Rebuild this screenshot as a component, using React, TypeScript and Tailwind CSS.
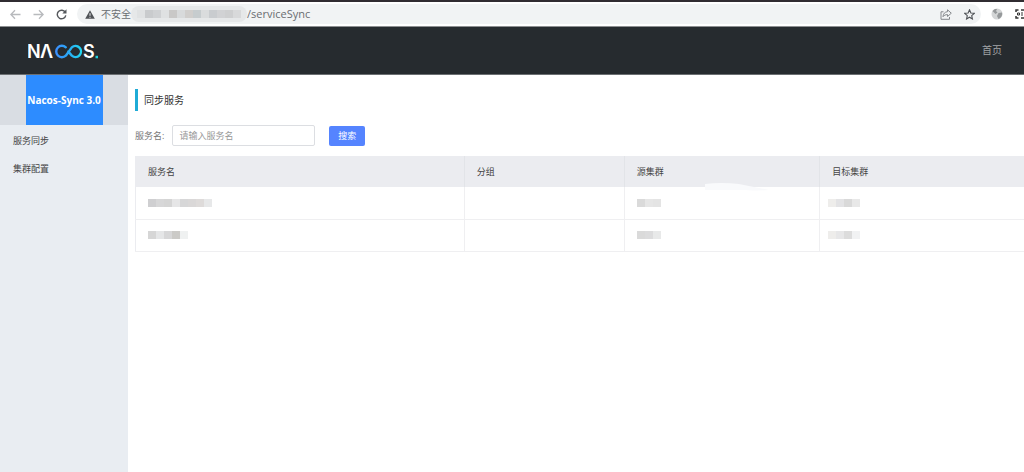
import { useState } from 'react'

interface SyncRow {
  id: string
  service: string[]
  group: string[]
  source: string[]
  target: string[]
}

const rows: SyncRow[] = [
  {
    id: 'a',
    service: ['bg-[#cfcfd1]', 'bg-[#d7d7d8]', 'bg-[#d5d5d5]', 'bg-[#e6e6e7]', 'bg-[#d7d7d8]', 'bg-[#dad8d8]', 'bg-[#dedbda]', 'bg-[#e7e8e9]'],
    group: [],
    source: ['bg-[#dadada]', 'bg-[#e6e6e6]', 'bg-[#e4e4e4]'],
    target: ['bg-[#eeedeb]', 'bg-[#e3e3e5]', 'bg-[#d9d9d9]', 'bg-[#e8e8e8]'],
  },
  {
    id: 'b',
    service: ['bg-[#d6d6d6]', 'bg-[#e5e6e7]', 'bg-[#d7d7d8]', 'bg-[#cbcac7]', 'bg-[#eff1f1]'],
    group: [],
    source: ['bg-[#dadada]', 'bg-[#dcdcdd]', 'bg-[#e8e9e9]'],
    target: ['bg-[#eeedeb]', 'bg-[#e7e7e8]', 'bg-[#dcdcdc]', 'bg-[#f1f2f3]'],
  },
]

const addressBlocks = [
  'bg-[#e0e2e3]', 'bg-[#c9cbcd]', 'bg-[#cfd1d3]', 'bg-[#dfe1e2]', 'bg-[#c9c8c7]', 'bg-[#d8dadb]', 'bg-[#d0cecc]',
  'bg-[#c6ccce]', 'bg-[#dadcdd]', 'bg-[#c9cccf]', 'bg-[#d1d2d4]', 'bg-[#cecfd0]', 'bg-[#d8d9da]',
]

function Mosaic({ blocks }: { blocks: string[] }) {
  return (
    <span className="flex" aria-hidden="true">
      {blocks.map((color, i) => (
        <span key={i} className={`w-2 h-2 ${color}`} />
      ))}
    </span>
  )
}

function Logo() {
  return (
    <svg width="72" height="30" viewBox="0 0 72 30" role="img" aria-label="Nacos">
      <defs>
        <linearGradient id="loop" gradientUnits="userSpaceOnUse" x1="26" y1="0" x2="55" y2="0">
          <stop offset="0" stopColor="#3f8cff" />
          <stop offset="0.45" stopColor="#2ba4f5" />
          <stop offset="1" stopColor="#1fdcf0" />
        </linearGradient>
      </defs>
      <g fill="#fff" fontFamily="Inter, 'Liberation Sans', sans-serif" fontSize="18" fontWeight="600">
        <text x="-1" y="22">N</text>
        <text x="12" y="22">Λ</text>
        <text x="55" y="22">S</text>
      </g>
      <path
        d="M37.800 11.300A5.700 5.700 0 1 0 37.800 19.700L43.800 11.400A5.500 5.500 0 1 1 43.800 19.600L40.300 15.500"
        fill="none"
        stroke="url(#loop)"
        strokeWidth="2.400"
        strokeLinecap="round"
        strokeLinejoin="round"
      />
      <rect x="67.500" y="19.800" width="2.500" height="2.500" fill="#1fd0dc" />
    </svg>
  )
}

function BrowserBar() {
  return (
    <div className="flex items-center h-[27px] bg-white border-t-2 border-t-[#302c31] border-b border-b-[#8d8f91] pl-2 overflow-hidden">
      <div className="flex items-center gap-3 px-0.5 text-[#b8babd]">
        <button aria-label="Back">
          <svg width="11" height="11" viewBox="0 0 11 11" fill="none" stroke="currentColor" strokeWidth="1.300">
            <path d="M10.500 5.500H1.200M5 1.300L.9 5.500 5 9.700" />
          </svg>
        </button>
        <button aria-label="Forward">
          <svg width="11" height="11" viewBox="0 0 11 11" fill="none" stroke="currentColor" strokeWidth="1.300">
            <path d="M.5 5.500h9.300M6 1.300l4.100 4.200L6 9.700" />
          </svg>
        </button>
        <button aria-label="Reload" className="text-[#55585c]">
          <svg width="11" height="11" viewBox="0 0 11 11" fill="none" stroke="currentColor" strokeWidth="1.400">
            <path d="M9.300 3.300A4.300 4.300 0 1 0 9.800 6.400" />
            <path d="M10.500.3v4.200H6.300z" fill="currentColor" stroke="none" />
          </svg>
        </button>
      </div>
      <div className="flex flex-1 items-center h-5 ml-2 rounded-full bg-[#f1f3f4] pl-2 pr-1.5 text-[#6a6d71]">
        <svg width="10" height="9" viewBox="0 0 10 9" aria-hidden="true">
          <path d="M5 .2L9.800 8.800H.2z" fill="#505357" />
          <path d="M5 3.200v2.600M5 6.800v1" stroke="#f1f3f4" strokeWidth="1" />
        </svg>
        <span className="ml-1.5 text-[10px]">不安全</span>
        <span className="flex items-center h-4 rounded-full bg-[#e6e8e9] px-1.5">
          <Mosaic blocks={addressBlocks} />
        </span>
        <span className="text-[11px]">/serviceSync</span>
        <div className="flex items-center gap-3 ml-auto">
          <button aria-label="Share">
            <svg width="12" height="11" viewBox="0 0 12 11" fill="none" stroke="#85888c" strokeWidth="1">
              <path d="M3.500 2.800H1v7.500h8.500V8" />
              <path d="M7.500.8l3.800 3.400-3.800 3.300V5.600C5.500 5.600 4 6.300 3 7.700c.2-3 1.800-4.800 4.500-5z" />
            </svg>
          </button>
          <button aria-label="Bookmark">
            <svg width="11" height="11" viewBox="0 0 12 12" fill="none" stroke="#505357" strokeWidth="1.200">
              <path d="M6 .9l1.500 3.400 3.700.4-2.800 2.500.8 3.700L6 9l-3.200 1.900.8-3.700L.8 4.700l3.700-.4z" />
            </svg>
          </button>
        </div>
      </div>
      <div className="flex items-center gap-3 ml-2.5">
        <svg width="12" height="12" viewBox="0 0 12 12" aria-hidden="true">
          <circle cx="6" cy="6" r="5.500" fill="#d3d5d6" />
          <path d="M1.500 3C3 1 5 .6 6 1.200L5 3l1.500 1.500L4.500 6zM7.500 5l3.500-.5c.8 3-1 5.500-3.500 6.500L6 8z" fill="#96999b" />
        </svg>
        <svg width="9" height="10" viewBox="0 0 9 10" fill="none" stroke="#333" aria-hidden="true">
          <path d="M1 3V1h2.500M6 1h3M1 7v2h2.500M6 9h3" strokeWidth="1.500" />
          <path d="M2.500 4h2v2h-2zM7 3v4" />
        </svg>
      </div>
    </div>
  )
}

export default function App() {
  const [keyword, setKeyword] = useState('')

  return (
    <div className="flex flex-col min-h-screen bg-white font-['Open_Sans','Noto_Sans_CJK_SC',sans-serif] text-[9px] text-[#555]">
      <BrowserBar />

      <header className="flex items-center justify-between h-12 bg-[#262b2f] border-b border-[#6b6f72] pl-7 pr-[22px]">
        <Logo />
        <a href="#" className="text-[10px] text-[#a2a5a7]">首页</a>
      </header>

      <div className="flex flex-1">
        <aside className="w-32 shrink-0 bg-[#e9edf2]">
          <div className="flex justify-center h-[50px] bg-[#d9dde3]">
            <h1 className="flex items-center justify-center w-[77px] bg-[#2d8cff] text-[10px] font-bold text-white whitespace-nowrap">
              Nacos-Sync 3.0
            </h1>
          </div>
          <nav className="flex flex-col pt-0.5 text-[#444]">
            <a href="#" className="flex items-center h-7 px-[13px]">服务同步</a>
            <a href="#" className="flex items-center h-7 px-[13px]">集群配置</a>
          </nav>
        </aside>

        <main className="flex-1 min-w-0 pl-[7px] pt-3.5">
          <h2 className="flex items-center h-[22px] border-l-3 border-[#1fabd6] pl-1.5 text-[10px] text-[#333]">
            同步服务
          </h2>

          <form className="flex items-center mt-3.5" onSubmit={e => e.preventDefault()}>
            <label htmlFor="service" className="text-[#777]">服务名:</label>
            <input
              id="service"
              value={keyword}
              onChange={e => setKeyword(e.target.value)}
              placeholder="请输入服务名"
              className="w-[143px] h-[21px] ml-2 px-1.5 border border-[#dcdee2] rounded-xs outline-none placeholder:text-[#999]"
            />
            <button type="submit" className="w-9 h-5 ml-3.5 rounded-xs bg-[#5584ff] text-white">
              搜索
            </button>
          </form>

          <table className="w-full mt-2.5 table-fixed border-collapse border-l border-[#ebecf0] text-left">
            <colgroup>
              <col className="w-[37%]" />
              <col className="w-[18%]" />
              <col className="w-[22%]" />
              <col />
            </colgroup>
            <thead>
              <tr className="h-[31px] bg-[#ebecf0] text-[#444]">
                <th className="pl-3 font-normal border-r border-[#e2e4e8]">服务名</th>
                <th className="pl-3 font-normal border-r border-[#e2e4e8]">分组</th>
                <th className="relative pl-3 font-normal border-r border-[#e2e4e8]">
                  源集群
                  <svg className="absolute right-[50px] -bottom-1 w-16" height="8" viewBox="0 0 64 8" aria-hidden="true">
                    <path d="M0 1q16-2 34 0l30 6q-10 1-24 0H0z" fill="#f9fafc" />
                  </svg>
                </th>
                <th className="pl-3 font-normal">目标集群</th>
              </tr>
            </thead>
            <tbody>
              {rows.map(row => (
                <tr key={row.id} className="h-8 border-b border-[#efeff1]">
                  <td className="pl-3 border-r border-[#efeff1]"><Mosaic blocks={row.service} /></td>
                  <td className="pl-3 border-r border-[#efeff1]"><Mosaic blocks={row.group} /></td>
                  <td className="pl-3 border-r border-[#efeff1]"><Mosaic blocks={row.source} /></td>
                  <td className="pl-2"><Mosaic blocks={row.target} /></td>
                </tr>
              ))}
            </tbody>
          </table>
        </main>
      </div>
    </div>
  )
}
